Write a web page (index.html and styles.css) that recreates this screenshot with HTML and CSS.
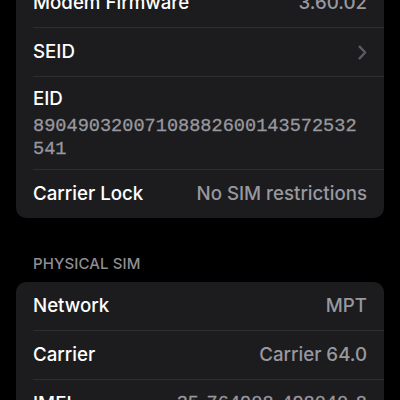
FILE: index.html
```html
<!DOCTYPE html>
<html lang="en">
<head>
<meta charset="utf-8">
<title>About</title>
<link rel="stylesheet" href="styles.css">
</head>
<body>
<main class="page">
  <section class="card">
    <div class="row">
      <span class="label">Modem Firmware</span>
      <span class="value">3.60.02</span>
    </div>
    <div class="row">
      <span class="label">SEID</span>
      <svg class="chevron" width="9" height="15" viewBox="0 0 9 15" aria-hidden="true"><path d="M1.6 1.6 L7.2 7.5 L1.6 13.4" fill="none" stroke="currentColor" stroke-width="2.3" stroke-linecap="round" stroke-linejoin="round"/></svg>
    </div>
    <div class="row row-stack">
      <span class="label">EID</span>
      <span class="mono">89049032007108882600143572532541</span>
    </div>
    <div class="row">
      <span class="label">Carrier Lock</span>
      <span class="value">No SIM restrictions</span>
    </div>
  </section>

  <h2 class="section-title">PHYSICAL SIM</h2>
  <section class="card">
    <div class="row">
      <span class="label">Network</span>
      <span class="value">MPT</span>
    </div>
    <div class="row">
      <span class="label">Carrier</span>
      <span class="value">Carrier 64.0</span>
    </div>
    <div class="row">
      <span class="label">IMEI</span>
      <span class="value mono-value">35 764908 498040 8</span>
    </div>
  </section>
</main>
</body>
</html>
```

FILE: styles.css
```css
html, body {
  margin: 0;
  padding: 0;
  background: #000;
  height: 100%;
  overflow: hidden;
}

body {
  font-family: Inter, "Noto Sans", "Liberation Sans", sans-serif;
  color: #fff;
  -webkit-font-smoothing: antialiased;
}

.page {
  margin-top: -21px;
  padding: 0 16px;
}

.card {
  background: #1c1c1e;
  border-radius: 10px;
  overflow: hidden;
}

.row {
  display: flex;
  justify-content: space-between;
  align-items: center;
  min-height: 48px;
  margin-left: 17px;
  padding-right: 17px;
  border-bottom: 1px solid #2e2e30;
  font-size: 18.7px;
  line-height: 22px;
  font-weight: 500;
}

.row:last-child {
  border-bottom: none;
}

.label {
  color: #fff;
}

.value {
  color: #98989f;
}

.chevron {
  color: #5b5b60;
  display: block;
}

.row-stack {
  flex-direction: column;
  align-items: flex-start;
  justify-content: flex-start;
  padding-top: 11px;
  padding-bottom: 8px;
  min-height: 0;
}

.mono {
  font-family: "Liberation Mono", "DejaVu Sans Mono", monospace;
  font-size: 18.6px;
  line-height: 23px;
  font-weight: 400;
  color: #98989f;
  -webkit-text-stroke: 0.3px #98989f;
  margin-top: 5px;
  width: 330px;
  word-break: break-all;
}

.mono-value {
  font-family: "Liberation Mono", "DejaVu Sans Mono", monospace;
  font-size: 18.6px;
  font-weight: 400;
  -webkit-text-stroke: 0.3px #98989f;
  word-spacing: -3.5px;
  white-space: pre;
}

.section-title {
  margin: 37px 0 9px 17px;
  font-size: 15px;
  line-height: 18px;
  font-weight: 500;
  color: #8e8e93;
  letter-spacing: 0.1px;
}
```
